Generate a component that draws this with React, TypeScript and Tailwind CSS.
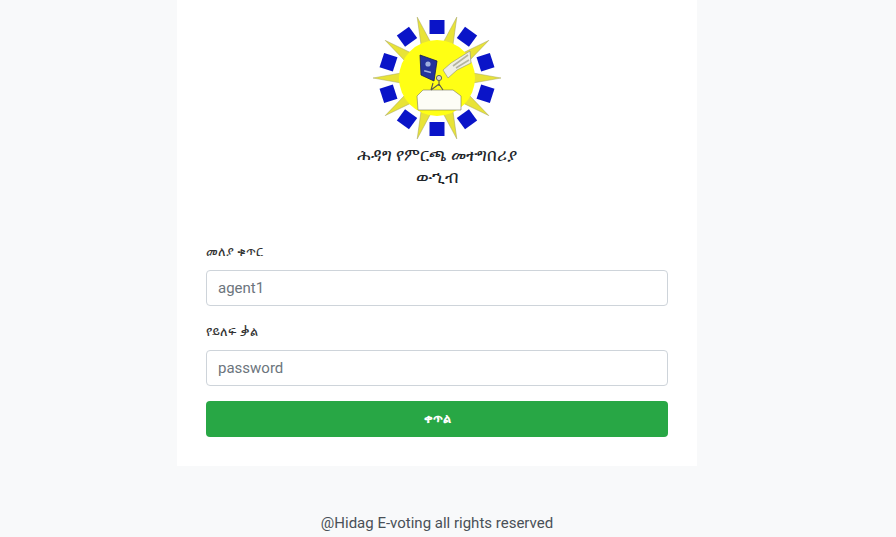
const FONT = "font-['Roboto','DejaVu_Sans',sans-serif]";

const RAYS = [18, 54, 90, 126, 162, 198, 234, 270, 306, 342];
const BLOCKS = [0, 36, 72, 108, 144, 180, 216, 252, 288, 324];

function Logo() {
  return (
    <svg width="134" height="126" viewBox="0 0 134 126" className="block">
      <g transform="translate(67 63)">
        {RAYS.map((a) => (
          <polygon key={a} transform={`rotate(${a})`} points="-5,-36 0,-64 5,-36" fill="#e8e337" stroke="#a9a860" strokeWidth="0.5" />
        ))}
        <circle r="38" fill="#ffff14" />
        {BLOCKS.map((a) => (
          <rect key={a} transform={`rotate(${a}) translate(0 -51)`} x="-7.5" y="-7" width="15" height="14" fill="#0a14c8" />
        ))}
        {/* ballot box */}
        <polygon points="-20,18 -14,12 16,12 24,18 24,32 -19,32" fill="#fdfdf6" stroke="#77775a" strokeWidth="0.6" />
        {/* blue book */}
        <polygon points="-17,-23 0,-17 -3,3 -16,-3" fill="#24349c" stroke="#111a55" strokeWidth="0.8" />
        <circle cx="-9" cy="-14" r="2.6" fill="#9fb0e0" />
        <rect x="-13" y="-7" width="7" height="1.5" fill="#9fb0e0" transform="rotate(14 -9 -6)" />
        {/* sleeve and hand */}
        <polygon points="6,-8 14,-15 33,-27 34,-15 20,-8 11,0" fill="#efefe4" stroke="#8d8d78" strokeWidth="0.6" />
        <path d="M16,-12 L31,-23 M19,-10 L32,-18" stroke="#b4b4a0" strokeWidth="1.6" fill="none" />
        {/* voter figure */}
        <circle cx="2" cy="0" r="2.6" fill="#d8d8c8" stroke="#555" strokeWidth="0.9" />
        <path d="M2,3 L2,8 M-6,12 L2,6 L6,12 M-4,5 L-6,12" stroke="#555" strokeWidth="1.1" fill="none" />
      </g>
    </svg>
  );
}

function Field({ label, value, className }: { label: string; value: string; className: string }) {
  return (
    <div className={className}>
      <label className="block mb-[9px] text-[13px] leading-[18px] text-[#333]">{label}</label>
      <div className="h-[36px] flex items-center px-[11px] bg-white border border-[#ced4da] rounded text-[15px] text-[#6c757d]">
        {value}
      </div>
    </div>
  );
}

export default function App() {
  return (
    <div className={`${FONT} h-[537px] overflow-hidden bg-[#f8f9fa]`}>
      <div className="w-[874px] flex flex-col items-center">
        <div className="w-[520px] h-[466px] shrink-0 bg-white px-[29px] pt-[15px]">
          <div className="flex justify-center">
            <Logo />
          </div>
          <div className="text-center text-[#212529] text-[16.5px] leading-[22px] mt-[4px]">
            <div>ሕዳግ የምርጫ መተግበሪያ</div>
            <div>ውኂብ</div>
          </div>
          <div className="mt-[54px]">
            <Field label="መለያ ቁጥር" value="agent1" className="mb-[17px]" />
            <Field label="የይለፍ ቃል" value="password" className="mb-[15px]" />
            <button className="w-full h-[36px] rounded bg-[#28a745] text-white text-[13px] font-bold">ቀጥል</button>
          </div>
        </div>
        <div className="mt-[47px] text-[15px] leading-[20px] text-[#495057]">@Hidag E-voting all rights reserved</div>
      </div>
    </div>
  );
}
